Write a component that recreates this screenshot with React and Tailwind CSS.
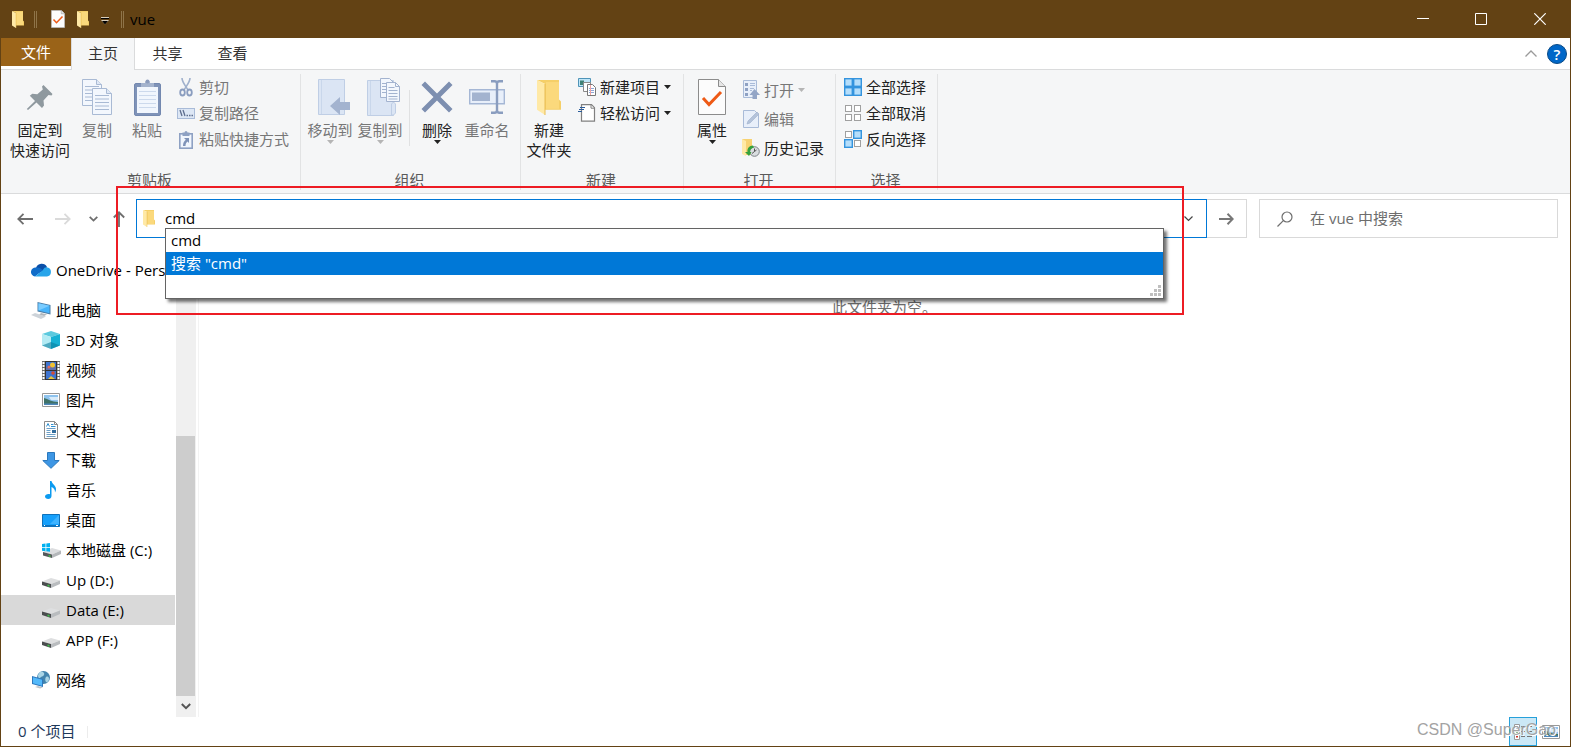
import React from 'react';

/* ---------- shared icons ---------- */

const Folder = ({ w = 12, h = 17 }) => (
  <svg width={w} height={h} viewBox="0 0 24 34" preserveAspectRatio="none" aria-hidden="true">
    <path d="M0 0h22v19l2 2v8H8V4z" fill="#f5cf68" />
    <path d="M9 2h13v26H9z" fill="#fbd97c" />
    <path d="M0 0l8 4v30l-8-5z" fill="#ffe9a6" />
    <path d="M8 4v30" stroke="#e9bd55" strokeWidth="1" />
  </svg>
);

const CheckDoc = ({ w, h }) => (
  <svg width={w} height={h} viewBox="0 0 28 36" preserveAspectRatio="none" aria-hidden="true">
    <path d="M.5.5h20l7 7v28H.5z" fill="#fcfcfc" stroke="#8c8c8c" />
    <path d="M20.5.5v7h7" fill="#e6e6e6" stroke="#8c8c8c" />
    <path d="M5 19l6 6.500 12-12.500" fill="none" stroke="#ee5a16" strokeWidth="3" />
  </svg>
);

const Caret = ({ className }) => (
  <svg width="7" height="4" viewBox="0 0 7 4" className={className} aria-hidden="true">
    <path d="M0 0h7L3.500 4z" fill="currentColor" />
  </svg>
);

const Pin = () => (
  <svg width="28" height="28" viewBox="0 0 28 28" aria-hidden="true">
    <path d="M17.500 2l9 9-1 1.500-3-.5-5 5.500.5 5-2 2.500-5.500-5.500L2 27l-1.200-1L9 18 3.800 12.800l2.500-2 5 .5L16.800 6.500l-.8-3z" fill="#8f999f" />
  </svg>
);

const Sheet = ({ x, y, lines = 5, h = 27 }) => (
  <g transform={`translate(${x} ${y})`}>
    <path d={`M.5.5h14l5 5V${h - 0.5}H.5z`} fill="#f3f7fd" stroke="#a9bad4" />
    <path d="M14.500.5v5h5" fill="#dfe8f6" stroke="#a9bad4" />
    {Array.from({ length: lines }, (_, i) => (
      <path key={i} d={`M3 ${i * 3.500 + 7.500}h14`} stroke="#a9bad4" />
    ))}
  </g>
);

const CopyIcon = () => (
  <svg width="31" height="37" viewBox="0 0 31 37" aria-hidden="true">
    <Sheet x={0} y={0} />
    <Sheet x={10} y={9} />
  </svg>
);

const PasteIcon = () => (
  <svg width="27" height="37" viewBox="0 0 27 37" aria-hidden="true">
    <rect x=".5" y="4.500" width="26" height="32" rx="1.500" fill="#7f93b8" stroke="#7388af" />
    <path d="M3 8h21v26H3z" fill="#f1f6fd" />
    <path d="M5 12.500h17M5 16.500h17M5 20.500h17M5 24.500h17M5 28.500h17" stroke="#ccd9ec" />
    <path d="M7 4h4a2.500 2.500 0 0 1 5 0h4v4H7z" fill="#a4b3cd" />
    <circle cx="13.500" cy="2.500" r="2" fill="#8b9cbd" />
  </svg>
);

const CutIcon = () => (
  <svg width="18" height="19" viewBox="0 0 18 19" fill="none" aria-hidden="true">
    <path d="M5 0c0 4 3 7 6 12M13 0c0 4-3 7-6 12" stroke="#9fb0cc" strokeWidth="1.600" />
    <ellipse cx="5.500" cy="14.500" rx="2.300" ry="3" stroke="#8a9dbf" strokeWidth="1.800" />
    <ellipse cx="12.500" cy="14.500" rx="2.300" ry="3" stroke="#8a9dbf" strokeWidth="1.800" />
  </svg>
);

const PathIcon = () => (
  <svg width="18" height="11" viewBox="0 0 18 11" aria-hidden="true">
    <rect x=".5" y=".5" width="17" height="10" fill="#dde7f5" stroke="#a9bbd8" />
    <path d="M3 2l2 6M6 2l2 6" stroke="#5f6f8f" strokeWidth="1.300" />
    <path d="M9.500 7.500h1.500M12 7.500h1.500M14.500 7.500H16" stroke="#5f6f8f" strokeWidth="1.300" />
  </svg>
);

const PasteLinkIcon = () => (
  <svg width="14" height="19" viewBox="0 0 14 19" aria-hidden="true">
    <rect x=".8" y="3.800" width="12.400" height="14.400" fill="#f1f6fd" stroke="#8ea1c3" strokeWidth="1.600" />
    <path d="M3.500 6V2.500h2a1.500 1.500 0 0 1 3 0h2V6z" fill="#8ea1c3" />
    <path d="M5 8h5v5L8.500 11.500C7 13 6.500 14 6.500 16H4c0-3 1-4.500 2.800-6.200z" fill="#7f93b8" />
  </svg>
);

const MoveToIcon = () => (
  <svg width="39" height="37" viewBox="-7 0 39 37" aria-hidden="true">
    <path d="M.5.5h26v35H.5z" fill="#dbe5f4" stroke="#bfcee5" />
    <path d="M3.500 1v34" stroke="#c9d7eb" />
    <path d="M12 27l10-9v5h10v8H22v5z" fill="#a3b3cf" />
  </svg>
);

const CopyToIcon = () => (
  <svg width="39" height="38" viewBox="-6 0 39 38" aria-hidden="true">
    <path d="M.5 2.500h26v35H.5z" fill="#dbe5f4" stroke="#bfcee5" />
    <path d="M3.500 3v34" stroke="#c9d7eb" />
    <path d="M24.500 37V26l2-2 2 2v9l-2 2z" fill="#dbe5f4" stroke="#bfcee5" />
    <g transform="translate(13 0)">
      <path d="M.5.5h9l4 4v15H.5z" fill="#f3f7fd" stroke="#a3b3cf" />
      <path d="M2 5.500h6M2 8.500h6M2 11.500h6M2 14.500h6" stroke="#a3b3cf" />
      <path d="M6.500 4.500h9l4 4v15h-13z" fill="#f3f7fd" stroke="#a3b3cf" />
      <path d="M15.500 4.500v4h4M8.500 9.500h6M8.500 12.500h9M8.500 15.500h9M8.500 18.500h9M8.500 21h9" fill="none" stroke="#a3b3cf" />
    </g>
  </svg>
);

const DeleteIcon = () => (
  <svg width="32" height="32" viewBox="0 0 32 32" aria-hidden="true">
    <path d="M4 .5l12 12 12-12 3.500 3.500-12 12 12 12-3.500 3.500-12-12-12 12L.5 28l12-12L.5 4z" fill="#7d8fb0" />
  </svg>
);

const RenameIcon = () => (
  <svg width="36" height="34" viewBox="0 0 36 34" aria-hidden="true">
    <path d="M.7 9.700h34.600v14H.7z" fill="#e8effa" stroke="#a5b7d5" strokeWidth="1.400" />
    <path d="M3 12.500h18v8.500H3z" fill="#a3b3cf" />
    <path d="M22 1.200h3.500c1.500 0 2.500 1 2.500 2.500v26.600c0 1.500-1 2.500-2.500 2.500H22M34 1.200h-3.500c-1.500 0-2.500 1-2.500 2.500M34 32.800h-3.500c-1.500 0-2.500-1-2.500-2.500" fill="none" stroke="#8a9dbf" strokeWidth="2.400" />
  </svg>
);

const NewItemIcon = () => (
  <svg width="18" height="18" viewBox="0 0 18 18" aria-hidden="true">
    <path d="M.5.5h12v8H.5z" fill="#bfe6f8" stroke="#4f94b8" />
    <path d="M2 2.500h4V7H2z" fill="#3f8276" />
    <path d="M5.500 4.500h7v9h-7z" fill="#fff" stroke="#8a8a8a" />
    <path d="M9.500 6.500h5l3 3v8h-8z" fill="#fff" stroke="#777" />
    <path d="M11 10.500h5M11 12.500h5M11 14.500h5" stroke="#8ea7d8" />
    <path d="M12.500 7v10" stroke="#f0a2a2" />
  </svg>
);

const EasyAccessIcon = () => (
  <svg width="18" height="18" viewBox="0 0 18 18" aria-hidden="true">
    <path d="M3.500.7h10l3 3v13.500h-13z" fill="#fff" stroke="#808080" strokeWidth="1.200" />
    <path d="M13 .7v3.500h3.500" fill="none" stroke="#808080" />
    <path d="M2 3.500h5M1 5.500h5M0 7.500h4" stroke="#2b5d9c" strokeWidth="1.100" />
  </svg>
);

const OpenIcon = () => (
  <svg width="17" height="19" viewBox="0 0 17 19" aria-hidden="true">
    <path d="M.5.500h13v17H.5z" fill="#e8effa" stroke="#a9bbd8" />
    <path d="M2 3h3v3H2zM2 8h3v3H2zM2 13h3v3H2z" fill="#8ea1c3" />
    <path d="M7 3.500h5M7 5.500h5M7 8.500h4M7 10.500h2" stroke="#a9bbd8" />
    <path d="M11.500 9l5.500 6h-3v4H9.500v-4H6.500z" fill="#93a5c6" />
  </svg>
);

const EditIcon = () => (
  <svg width="17" height="18" viewBox="0 0 17 18" aria-hidden="true">
    <path d="M.5.5h11l4 4v13H.5z" fill="#e8effa" stroke="#a9bbd8" />
    <path d="M4 14l1-3L14 2l2 2-9 9z" fill="#b4c3da" stroke="#9dafcb" strokeWidth=".6" />
  </svg>
);

const HistoryIcon = () => (
  <svg width="18" height="18" viewBox="0 0 18 18" aria-hidden="true">
    <path d="M0 0h10v16H4z" fill="#f7d272" />
    <path d="M0 0l4 2v15l-4-2z" fill="#ffe9a6" />
    <circle cx="12.500" cy="12.500" r="4.800" fill="#d9dde0" stroke="#7c8387" />
    <path d="M12.500 9.500v3l-2.500 2M12.500 12.500l2-1.500" stroke="#555" fill="none" />
    <path d="M11 6.500c-4 0-6 3-5.500 6.500H3l4 4 2.500-4H8c0-2 1-4 4-4.500z" fill="#35a13d" />
  </svg>
);

/* on lists the highlighted cells: 0 top-left, 1 top-right, 2 bottom-left, 3 bottom-right */
const SelectGrid = ({ on }) => (
  <svg width="18" height="18" viewBox="0 0 18 18" aria-hidden="true">
    {on.length === 4 && <path d="M0 0h18v18H0z" fill="#3494de" />}
    {[0, 1, 2, 3].map((i) => {
      const active = on.includes(i);
      const x = (i % 2) * 9;
      const y = i > 1 ? 9 : 0;
      return active ? (
        <rect key={i} x={x + 0.7} y={y + 0.7} width="7.600" height="7.600" fill="#b5defb" stroke="#3494de" strokeWidth="1.400" />
      ) : (
        <rect key={i} x={x + 1.500} y={y + 1.500} width="6" height="6" fill="#fff" stroke="#a0a0a0" />
      );
    })}
  </svg>
);

/* ---------- navigation icons ---------- */

const OneDrive = () => (
  <svg width="20" height="14" viewBox="0 0 20 14" aria-hidden="true">
    <path d="M5 5a6 6 0 0 1 11-1l-3 4-8 3z" fill="#0a4fa8" />
    <path d="M5 4.500c3-.5 5 1 7 2.500L4 13.500A4.300 4.300 0 0 1 5 4.500z" fill="#0f6cc9" />
    <path d="M12 7c1-2.500 3-3 4.500-2.500A4.600 4.600 0 0 1 16 13.500H4z" fill="#28a5ea" />
  </svg>
);

const ThisPC = () => (
  <svg width="20" height="18" viewBox="0 0 20 18" aria-hidden="true">
    <path d="M6.500 1l13 3v9.500l-13-3z" fill="#4b7ea8" />
    <path d="M7.500 2.300l11 2.500v7.400l-11-2.600z" fill="#47b4fb" />
    <path d="M7.500 2.300l11 2.500-11 4.800z" fill="#7accff" />
    <path d="M10 12l6 1.500-3 1.500-5-1z" fill="#b0b6bb" />
    <path d="M0 14l4-2 11 3.500-5 2.500z" fill="#cdd3d9" />
  </svg>
);

const Cube = () => (
  <svg width="18" height="18" viewBox="0 0 18 18" aria-hidden="true">
    <path d="M9 0l9 3-9 3-9-3z" fill="#5cc9de" />
    <path d="M0 3l9 3v12l-9-3.500z" fill="#b3ebf4" />
    <path d="M18 3L9 6v12l9-3.500z" fill="#17b1d4" />
    <path d="M0 14.500L9 11l9 3.500L9 18z" fill="#0a7f9e" opacity=".6" />
  </svg>
);

const Video = () => (
  <svg width="18" height="19" viewBox="0 0 18 19" aria-hidden="true">
    <path d="M0 0h18v19H0z" fill="#6a6a6a" />
    <path d="M1.500 1v18M16.500 1v18" stroke="#fff" strokeWidth="2" strokeDasharray="2 1" />
    <path d="M3 0h12v19H3z" fill="#333" />
    <path d="M4 1h10v8H4zM4 10h10v8H4z" fill="#3d74d0" />
    <path d="M4 6h10v3H4z" fill="#5f6fae" />
    <circle cx="10.500" cy="4" r="2.500" fill="#f1c232" />
    <circle cx="11" cy="12" r="1.800" fill="#d84b32" />
    <circle cx="7" cy="6" r="1.500" fill="#e46b5a" />
    <path d="M6 18l3-3 4 3z" fill="#e8c33a" />
  </svg>
);

const Picture = () => (
  <svg width="18" height="14" viewBox="0 0 18 14" aria-hidden="true">
    <path d="M.5.5h17v13H.5z" fill="#fff" stroke="#999" />
    <path d="M2 2h14v10H2z" fill="#8ec3ee" />
    <path d="M7 4h9v3H9z" fill="#d9ecfa" />
    <path d="M2 5c4 1 8 4 14 4v3H2z" fill="#3f7268" />
    <path d="M2 10.500h14V12H2z" fill="#4d86ba" />
  </svg>
);

const Document = () => (
  <svg width="14" height="18" viewBox="0 0 14 18" aria-hidden="true">
    <path d="M.5.5h10l3 3v14H.5z" fill="#fff" stroke="#8b8b8b" />
    <path d="M10.500.5v3h3" fill="none" stroke="#8b8b8b" />
    <path d="M2.500 5.500L4 2.500l1.500 3M7 3.500h2.500M7 5.500h4.500" stroke="#2e8fd0" fill="none" />
    <path d="M2.500 7.500h9M2.500 9.500h4M2.500 11.500h4M2.500 13.500h9M2.500 15.500h9" stroke="#6d9fc6" />
    <path d="M8 9h4v3H8z" fill="#326d9d" />
  </svg>
);

const Download = () => (
  <svg width="18" height="17" viewBox="0 0 18 17" aria-hidden="true">
    <path d="M5.500.5h7v8h4.700L9 16.300.8 8.500h4.700z" fill="#3d96e4" stroke="#2a78bd" />
  </svg>
);

const Music = () => (
  <svg width="12" height="18" viewBox="0 0 12 18" aria-hidden="true">
    <path d="M5 0h1.500c.5 3 4.500 4.500 4.500 8 0 1.500-.5 2.500-1 3.500.3-3-1.500-4.500-3.500-5.500v9c0 2-1.500 3-3.300 3S0 17 0 15.500 1.500 13 3.500 13c.6 0 1 .1 1.500.3z" fill="#0c9bf0" />
  </svg>
);

const Desktop = () => (
  <svg width="18" height="13" viewBox="0 0 18 13" aria-hidden="true">
    <path d="M.5.5h17v12H.5z" fill="#16a0fb" stroke="#0f72bb" />
    <path d="M17 1v9H8z" fill="#3fb3ff" />
    <path d="M1 11h16v1H1z" fill="#0f72bb" />
    <path d="M2 11.500h1M14 11.500h2" stroke="#fff" />
  </svg>
);

const Drive = () => (
  <svg width="18" height="16" viewBox="0 -6 18 16" aria-hidden="true">
    <path d="M0 3.500L9 0l9 2.500-9 3.500z" fill="#dedfe0" />
    <path d="M9 6l9-3.500v3.500L9 10z" fill="#b9bcbf" />
    <path d="M0 3.500L9 6v4L0 7z" fill="#4a4d4f" />
    <path d="M5.500 6.500l2 .6v1.700l-2-.6z" fill="#3fc44a" />
  </svg>
);

const SystemDrive = () => (
  <svg width="19" height="15" viewBox="0 0 19 15" aria-hidden="true">
    <path d="M1 9l9-4 9 2.500-9 4z" fill="#dcdddf" />
    <path d="M10 11.500l9-4V11l-9 4z" fill="#b4b7ba" />
    <path d="M1 9l9 2.500V15l-9-2.500z" fill="#55585a" />
    <path d="M6.500 12l2 .6V14l-2-.6z" fill="#3fc44a" />
    <path d="M0 1l3.500-.5V4H0zM4.300.4L8 0v4H4.300zM0 4.800h3.500v3.400L0 7.800zM4.300 4.800H8v4l-3.700-.5z" fill="#00b1f0" />
  </svg>
);

const Network = () => (
  <svg width="18" height="18" viewBox="0 0 18 18" aria-hidden="true">
    <circle cx="11.500" cy="6.500" r="6.500" fill="#4284ae" />
    <path d="M8 1c3-1 5 1 4 3s-3 1-4 3-2-1-2-3zM14 6c2-1 3 0 3 2s-2 4-3 3-1-4 0-5z" fill="#a9d5e6" />
    <path d="M0 5l11 3v8L0 13z" fill="#2e78bd" />
    <path d="M1 6.300l9 2.500v6L1 12.300z" fill="#53b9fa" />
    <path d="M3 16l3-1 5 1.500-3 1z" fill="#bfc4c8" />
  </svg>
);

/* ---------- ribbon pieces ---------- */

function Big({ icon, lines, muted, caret, wide }) {
  return (
    <button
      type="button"
      className={`flex shrink-0 flex-col items-center whitespace-nowrap ${wide ? 'w-[62px]' : 'w-[50px]'} ${muted ? 'text-[#777777]' : 'text-[#222222]'}`}
    >
      <span className="flex h-[46px] items-center justify-center">{icon}</span>
      <span className="flex flex-col">
        {lines.map((l) => (
          <span key={l} className="leading-5">{l}</span>
        ))}
      </span>
      {caret && <Caret className={muted ? 'text-[#b5b5b5]' : 'text-[#222222]'} />}
    </button>
  );
}

function Small({ icon, label, muted, caret, tall }) {
  return (
    <button
      type="button"
      className={`flex items-center gap-1 whitespace-nowrap ${tall ? 'h-[29px]' : 'h-[26px]'} ${muted ? 'text-[#777777]' : 'text-[#222222]'}`}
    >
      <span className="flex w-[18px] justify-center">{icon}</span>
      <span>{label}</span>
      {caret && <Caret className={muted ? 'text-[#b5b5b5]' : 'text-[#222222]'} />}
    </button>
  );
}

function Group({ label, width, children }) {
  return (
    <section aria-label={label} className={`flex shrink-0 flex-col pt-1 ${width}`}>
      <div className="flex flex-1 border-r border-[#e2e3e4]">
        <div className="flex flex-1 flex-col">
          <div className="flex h-[96px]">{children}</div>
          <div className="pr-[2px] text-center leading-5 text-[#5a5a5a]">{label}</div>
        </div>
      </div>
    </section>
  );
}

function Ribbon() {
  return (
    <div className="flex h-[124px] overflow-hidden border-b border-[#dadbdc] bg-[#f5f6f7] pb-1">
      <Group label="剪贴板" width="w-[300px]">
        <div className="flex pl-2">
          <Big wide icon={<Pin />} lines={['固定到', '快速访问']} />
          <div className="flex pl-px">
            <Big muted icon={<CopyIcon />} lines={['复制']} />
            <Big muted icon={<PasteIcon />} lines={['粘贴']} />
          </div>
          <div className="flex flex-col pl-[5px]">
            <Small muted icon={<CutIcon />} label="剪切" />
            <Small muted icon={<PathIcon />} label="复制路径" />
            <Small muted icon={<PasteLinkIcon />} label="粘贴快捷方式" />
          </div>
        </div>
      </Group>
      <Group label="组织" width="w-[220px]">
        <div className="flex pl-1">
          <Big muted caret icon={<MoveToIcon />} lines={['移动到']} />
          <Big muted caret icon={<CopyToIcon />} lines={['复制到']} />
          <span className="mr-[2px] ml-1 mt-4 h-14 w-px bg-[#e0e1e2]" />
          <Big caret icon={<DeleteIcon />} lines={['删除']} />
          <Big muted icon={<RenameIcon />} lines={['重命名']} />
        </div>
      </Group>
      <Group label="新建" width="w-[163px]">
        <div className="flex pl-[3px]">
          <Big icon={<Folder w={24} h={35} />} lines={['新建', '文件夹']} />
          <div className="flex flex-col pl-1">
            <Small caret icon={<NewItemIcon />} label="新建项目" />
            <Small caret icon={<EasyAccessIcon />} label="轻松访问" />
          </div>
        </div>
      </Group>
      <Group label="打开" width="w-[152px]">
        <div className="flex pl-[3px]">
          <Big caret icon={<CheckDoc w={28} h={36} />} lines={['属性']} />
          <div className="flex flex-col pt-px pl-[5px]">
            <Small tall muted caret icon={<OpenIcon />} label="打开" />
            <Small tall muted icon={<EditIcon />} label="编辑" />
            <Small tall icon={<HistoryIcon />} label="历史记录" />
          </div>
        </div>
      </Group>
      <Group label="选择" width="w-[102px]">
        <div className="flex flex-col pl-2">
          <Small icon={<SelectGrid on={[0, 1, 2, 3]} />} label="全部选择" />
          <Small icon={<SelectGrid on={[]} />} label="全部取消" />
          <Small icon={<SelectGrid on={[1, 2]} />} label="反向选择" />
        </div>
      </Group>
    </div>
  );
}

/* ---------- address row ---------- */

function Suggestions() {
  return (
    <ul
      role="listbox"
      aria-label="地址建议"
      className="absolute top-[28px] right-[42px] left-[28px] z-10 border border-[#646464] bg-white pb-[23px] shadow-[3px_3px_3px_rgba(0,0,0,0.55)]"
    >
      <li role="option" aria-selected="false" className="h-[23px] px-[5px] leading-[22px] text-black">cmd</li>
      <li role="option" aria-selected="true" className="h-[23px] bg-[#0078d7] px-[5px] leading-[22px] text-white">搜索 "cmd"</li>
      <svg width="11" height="11" viewBox="0 0 11 11" className="absolute right-[2px] bottom-[2px]" aria-hidden="true">
        <path d="M8 0h3v3H8zM4 4h3v3H4zM8 4h3v3H8zM0 8h3v3H0zM4 8h3v3H4zM8 8h3v3H8z" fill="#bfbfbf" />
      </svg>
    </ul>
  );
}

function AddressRow() {
  return (
    <div className="flex items-center pt-[5px] pr-3 pb-[7px]">
      <div className="flex w-[135px] shrink-0 items-center pl-[15px]">
        <button type="button" aria-label="后退" className="flex w-[18px] justify-center">
          <svg width="16" height="12" viewBox="0 0 16 12" fill="none" stroke="#6e6e6e" strokeWidth="1.800"><path d="M1 6h15M6.500.8L1.300 6l5.200 5.200" /></svg>
        </button>
        <button type="button" aria-label="前进" className="ml-5 flex w-[18px] justify-center">
          <svg width="16" height="12" viewBox="0 0 16 12" fill="none" stroke="#dadada" strokeWidth="1.800"><path d="M0 6h15M9.500.8L14.700 6l-5.200 5.200" /></svg>
        </button>
        <button type="button" aria-label="最近浏览的位置" className="ml-3 flex w-[18px] justify-center">
          <svg width="9" height="6" viewBox="0 0 9 6" fill="none" stroke="#6e6e6e" strokeWidth="1.800"><path d="M.7.8l3.800 3.800L8.300.8" /></svg>
        </button>
        <button type="button" aria-label="上移" className="ml-2 flex w-[18px] justify-center">
          <svg width="12" height="16" viewBox="0 0 12 16" fill="none" stroke="#6e6e6e" strokeWidth="1.800"><path d="M6 16V1M.8 6.500L6 1.300l5.200 5.200" /></svg>
        </button>
      </div>

      <div className="relative flex h-[39px] flex-1 items-center border border-[#0078d7] bg-white pl-[6px]">
        <Folder />
        <input
          aria-label="地址"
          defaultValue="cmd"
          className="ml-[10px] min-w-0 flex-1 bg-transparent pb-[2px] text-black outline-none"
        />
        <button type="button" aria-label="以前的位置" className="mr-[13px]">
          <svg width="9" height="6" viewBox="0 0 9 6" fill="none" stroke="#444" strokeWidth="1.200"><path d="M.5.5l4 4 4-4" /></svg>
        </button>
        <Suggestions />
        <div className="pointer-events-none absolute -top-[14px] right-[22px] -left-[21px] z-20 h-[129px] border-2 border-[#ed1c24]" />
      </div>
      <button type="button" aria-label="转到" className="flex h-[39px] w-10 items-center justify-center border border-l-0 border-[#d9d9d9]">
        <svg width="15" height="12" viewBox="0 0 15 12" fill="none" stroke="#777" strokeWidth="2"><path d="M0 6h13.500M8.500.8L13.700 6l-5.200 5.200" /></svg>
      </button>
      <label className="ml-3 flex h-[39px] w-[299px] items-center border border-[#d9d9d9] pl-[17px]">
        <svg width="16" height="16" viewBox="0 0 16 16" fill="none" stroke="#6e6e6e" strokeWidth="1.200" aria-hidden="true">
          <circle cx="10" cy="6" r="5" />
          <path d="M6.300 9.700L.5 15.500" />
        </svg>
        <input
          aria-label="搜索"
          placeholder="在 vue 中搜索"
          className="ml-[17px] min-w-0 flex-1 bg-transparent pb-[2px] outline-none placeholder:text-[#6d6d6d]"
        />
      </label>
    </div>
  );
}

/* ---------- navigation pane ---------- */

const pcItems = [
  ['3D 对象', <Cube />],
  ['视频', <Video />],
  ['图片', <Picture />],
  ['文档', <Document />],
  ['下载', <Download />],
  ['音乐', <Music />],
  ['桌面', <Desktop />],
  ['本地磁盘 (C:)', <SystemDrive />],
  ['Up (D:)', <Drive />],
  ['Data (E:)', <Drive />],
  ['APP (F:)', <Drive />],
];

function NavItem({ icon, label, nested, selected }) {
  return (
    <a
      href="#"
      className={`flex h-[30px] items-center gap-[5px] overflow-hidden whitespace-nowrap ${nested ? 'pl-10' : 'pl-[30px]'} ${selected ? 'bg-[#d9d9d9]' : ''}`}
    >
      <span className="flex w-5 shrink-0 justify-center">{icon}</span>
      {label}
    </a>
  );
}

function Sidebar() {
  return (
    <aside className="flex w-[198px] shrink-0 border-r border-[#f3f3f3]">
      <nav aria-label="导航窗格" className="flex w-[174px] flex-col gap-[10px] pt-[10px] pb-5 text-black">
        <NavItem icon={<OneDrive />} label="OneDrive - Pers" />
        <div>
          <NavItem icon={<ThisPC />} label="此电脑" />
          {pcItems.map(([label, icon]) => (
            <NavItem key={label} nested icon={icon} label={label} selected={label === 'Data (E:)'} />
          ))}
        </div>
        <NavItem icon={<Network />} label="网络" />
      </nav>
      <div className="ml-px flex w-5 flex-col justify-end bg-[#f0f0f0]">
        <div className="mr-px h-[260px] bg-[#cdcdcd]" />
        <button type="button" aria-label="向下滚动" className="flex h-[21px] items-center justify-center">
          <svg width="10" height="7" viewBox="0 0 10 7" fill="none" stroke="#555" strokeWidth="2"><path d="M.8 1L5 5.200 9.200 1" /></svg>
        </button>
      </div>
    </aside>
  );
}

/* ---------- window ---------- */

function TitleBar() {
  return (
    <header className="flex h-[38px] items-center bg-[#634214]">
      <div className="flex flex-1 items-center pl-[11px]">
        <Folder />
        <span className="ml-[10px] h-[17px] w-[3px] border-x border-[#8f7449]" />
        <button type="button" aria-label="属性" className="ml-[14px]"><CheckDoc w={14} h={18} /></button>
        <button type="button" aria-label="新建文件夹" className="ml-3"><Folder /></button>
        <button type="button" aria-label="自定义快速访问工具栏" className="ml-3 pt-1">
          <svg width="8" height="8" viewBox="0 0 8 8">
            <path d="M0 0h8v2H0z" fill="#000" />
            <path d="M0 0h8v1H0z" fill="#d8cdbb" />
            <path d="M0 3h8L4 7.500z" fill="#d8cdbb" />
            <path d="M1 4h6L4 7.500z" fill="#000" />
          </svg>
        </button>
        <span className="ml-3 h-[17px] w-[3px] border-x border-[#8f7449]" />
        <h1 className="ml-[6px] leading-5 text-black">vue</h1>
      </div>
      <button type="button" aria-label="最小化" className="flex h-full w-[58px] items-center justify-center">
        <svg width="12" height="12" viewBox="0 0 12 12" stroke="#fff"><path d="M0 5.500h12" /></svg>
      </button>
      <button type="button" aria-label="最大化" className="flex h-full w-[58px] items-center justify-center">
        <svg width="12" height="12" viewBox="0 0 12 12" fill="none" stroke="#fff"><path d="M.5.5h11v11H.5z" /></svg>
      </button>
      <button type="button" aria-label="关闭" className="flex h-full w-[60px] items-center justify-center">
        <svg width="12" height="12" viewBox="0 0 12 12" stroke="#fff" strokeWidth="1.200"><path d="M.3.3l11.400 11.400M11.700.3L.3 11.700" /></svg>
      </button>
    </header>
  );
}

function Tabs() {
  return (
    <div className="flex h-8 bg-white text-[#333333]">
      <div className="flex border-b border-[#dadbdc]">
        <button type="button" className="h-[28px] w-[70px] bg-[#9a6318] text-white">文件</button>
      </div>
      <button type="button" className="w-16 border-x border-[#dadbdc] bg-[#f5f6f7] pb-[2px]">主页</button>
      <div className="flex flex-1 items-center border-b border-[#dadbdc]">
        <button type="button" className="w-[65px] pb-px">共享</button>
        <button type="button" className="w-[65px] pb-px">查看</button>
        <button type="button" aria-label="最小化功能区" className="mr-[10px] ml-auto">
          <svg width="12" height="7" viewBox="0 0 12 7" fill="none" stroke="#9a9a9a" strokeWidth="1.300"><path d="M.5 6.500L6 1l5.500 5.500" /></svg>
        </button>
        <button type="button" aria-label="帮助" className="mr-[3px] flex h-5 w-5 items-center justify-center rounded-full border border-[#0a4a86] bg-[#0067c8] font-semibold leading-5 text-white">?</button>
      </div>
    </div>
  );
}

function StatusBar() {
  return (
    <footer className="flex h-[29px] items-stretch text-[#1e395b]">
      <div className="flex items-center pb-[2px] pl-[17px]">0 个项目</div>
      <span className="ml-3 h-3 w-px self-center bg-[#ececec]" />
      <div className="relative ml-auto flex items-stretch gap-[5px] pr-[10px]">
        <button type="button" aria-label="详细信息" className="flex w-7 items-center justify-center border border-[#26a0da] bg-[#cbe8f6]">
          <svg width="18" height="16" viewBox="0 0 18 16">
            <path d="M.5.5h5v15h-5z" fill="#fff" stroke="#9a9a9a" />
            <path d="M2 2.500h2v2H2z" fill="#4a7dbd" />
            <path d="M2 7h2v2H2z" fill="#5aa06a" />
            <path d="M2 11.500h2v2H2z" fill="#d0342c" />
            <path d="M7 2.500h4M13 2.500h5M7 7.500h4M13 7.500h5M7 12.500h4M13 12.500h5" stroke="#777" />
          </svg>
        </button>
        <button type="button" aria-label="大缩略图" className="flex items-center"><Picture /></button>
        <span className="pointer-events-none absolute top-px right-[14px] font-['Liberation_Sans',sans-serif] text-base leading-6 whitespace-nowrap text-[#a3a3a3] [text-shadow:1px_1px_0_#ffffff]">
          CSDN @SuperGao
        </span>
      </div>
    </footer>
  );
}

export default function App() {
  return (
    <div className="flex min-h-screen flex-col border-r border-b border-l border-[#634214] bg-white font-['Open_Sans','Noto_Sans_CJK_SC',sans-serif] text-[15px] leading-5">
      <TitleBar />
      <Tabs />
      <Ribbon />
      <AddressRow />
      <div className="flex flex-1">
        <Sidebar />
        <main className="flex-1 pt-[52px] text-center text-[#6d6d6d]">此文件夹为空。</main>
      </div>
      <StatusBar />
    </div>
  );
}
